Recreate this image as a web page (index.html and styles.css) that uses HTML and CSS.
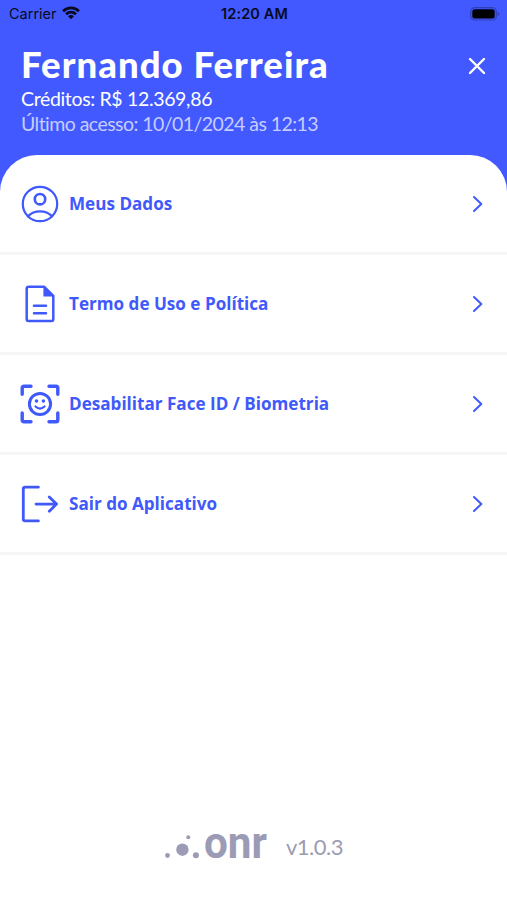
FILE: index.html
```html
<!DOCTYPE html>
<html lang="pt-BR">
<head>
<meta charset="utf-8">
<meta name="viewport" content="width=device-width, initial-scale=1">
<title>Menu</title>
<link rel="stylesheet" href="styles.css">
</head>
<body>
<div class="screen">
  <div class="status">
    <div class="carrier"><span>Carrier</span>
      <svg width="18" height="14" viewBox="0 0 20 15" fill="none" stroke="#080b20" stroke-width="3"><path d="M1.2 5.5a12.5 12.5 0 0 1 17.6 0M4.5 8.8a7.8 7.8 0 0 1 11 0"/><path d="M6.7 11.1a4.6 4.6 0 0 1 6.6 0L10 14.4Z" fill="#080b20" stroke="none"/></svg>
    </div>
    <div class="clock">12:20 AM</div>
    <div class="battery">
      <svg width="30" height="14" viewBox="0 0 30 14"><rect x=".7" y=".7" width="25.6" height="12.3" rx="4" fill="none" stroke="#2f3fb5" stroke-width="1.2"/><rect x="2.3" y="2.3" width="22.4" height="9.1" rx="2.5" fill="#000"/><path d="M27.6 5v4q1.7-.6 1.7-2t-1.7-2Z" fill="#2f3fb5"/></svg>
    </div>
  </div>
  <header class="header">
    <div class="title-row">
      <h1 class="name">Fernando Ferreira</h1>
      <svg class="close" width="18" height="18" viewBox="0 0 18 18" fill="none" stroke="#fff" stroke-width="2.4" stroke-linecap="round"><path d="m2 2 14 14M16 2 2 16"/></svg>
    </div>
    <p class="credits">Créditos: R$ 12.369,86</p>
    <p class="access">Último acesso: 10/01/2024 às 12:13</p>
  </header>
  <main class="sheet">
    <nav>
      <a class="item">
        <svg class="icon" viewBox="0 0 40 40"><circle cx="20" cy="20" r="17.2" stroke-width="2.2"/><circle cx="20" cy="15.2" r="5.2" stroke-width="2.6"/><path d="M8 32.2q4.8-4.8 12-4.8t12 4.8" stroke-width="2.4"/></svg>
        <span class="label">Meus Dados</span>
        <svg class="chevron" viewBox="0 0 12 18"><path d="m2 2 7.3 7L2 16"/></svg>
      </a>
      <a class="item">
        <svg class="icon" viewBox="0 0 40 40"><path d="M8.7 2.7H24L33.3 12v23.2q0 1.7-1.7 1.7H8.4q-1.7 0-1.7-1.7V4.7q0-2 2-2Z" stroke-width="2.5"/><path d="M24 2.7V12h9.3Z" fill="#4059fa" stroke-width="1.2"/><path d="M14 21.8h12M14 29.3h12" stroke-width="2.5"/></svg>
        <span class="label">Termo de Uso e Política</span>
        <svg class="chevron" viewBox="0 0 12 18"><path d="m2 2 7.3 7L2 16"/></svg>
      </a>
      <a class="item">
        <svg class="icon" viewBox="0 0 40 40"><path d="M2.2 10.2V4q0-1.8 1.8-1.8h7M29 2.2h7q1.8 0 1.8 1.8v6.2M37.8 29v7q0 1.8-1.8 1.8h-7M11 37.8H4Q2.2 37.8 2.2 36v-7" stroke-width="3.4"/><circle cx="20" cy="20" r="10.6" stroke-width="3"/><circle cx="16.5" cy="17" r="1.8" fill="#4059fa" stroke="none"/><circle cx="23.4" cy="17" r="1.8" fill="#4059fa" stroke="none"/><path d="M15.5 22.5q4.5 4.2 9 0" stroke-width="2.2"/></svg>
        <span class="label">Desabilitar Face ID / Biometria</span>
        <svg class="chevron" viewBox="0 0 12 18"><path d="m2 2 7.3 7L2 16"/></svg>
      </a>
      <a class="item">
        <svg class="icon" viewBox="0 0 40 40"><path d="M18.4 3.2H5.1Q3.3 3.2 3.3 5v30q0 1.9 1.8 1.9h13.3" stroke-width="2.8"/><path d="M16 20.1h20.5M29.3 12.9l7.2 7.2-7.2 7.2" stroke-width="2.8"/></svg>
        <span class="label">Sair do Aplicativo</span>
        <svg class="chevron" viewBox="0 0 12 18"><path d="m2 2 7.3 7L2 16"/></svg>
      </a>
    </nav>
    <footer class="footer">
      <svg width="108" height="56" viewBox="0 -16 108 56" fill="#9c9bb5"><circle cx="3.5" cy="27.5" r="2.4"/><circle cx="18.4" cy="21.7" r="6.2"/><circle cx="24.3" cy="9.2" r="2"/><circle cx="31.9" cy="27.2" r="3"/><text class="brand" x="40" y="29.5" textLength="63" lengthAdjust="spacingAndGlyphs">onr</text></svg>
      <span class="version">v1.0.3</span>
    </footer>
  </main>
</div>
</body>
</html>
```
FILE: styles.css
```css
* { box-sizing: border-box; }
body { margin: 0; background: #4259ff; }
h1, p { margin: 0; font-weight: 400; }
svg { display: block; flex: none; }
.screen {
  width: 507px;
  height: 900px;
  overflow: hidden;
  display: flex;
  flex-direction: column;
  background: #4259ff;
  font-family: Lato, sans-serif;
  font-variant-ligatures: none;
}
.status {
  height: 28px;
  padding: 0 7px 0 9px;
  display: grid;
  grid-template-columns: 1fr auto 1fr;
  align-items: center;
  font: 500 14.5px/28px Inter, sans-serif;
  color: #080b20;
}
.carrier { display: flex; align-items: center; gap: 5px; font-weight: 400; }
.carrier svg { margin-top: -3px; }
.clock { font-weight: 600; letter-spacing: .1px; }
.battery { justify-self: end; margin-top: -1px; }
.header { height: 126.5px; padding: 15px 21px 0 21px; color: #fff; white-space: nowrap; }
.title-row { height: 44px; display: flex; justify-content: space-between; align-items: center; }
.name { margin-top: -2px; font-size: 36.5px; line-height: 43px; font-weight: 900; letter-spacing: 1.05px; }
.close { margin-top: 1px; }
.credits { font-size: 19.5px; line-height: 24px; letter-spacing: -.34px; }
.access { font-size: 19.5px; line-height: 25px; letter-spacing: -.55px; color: #c6cdff; }
.sheet {
  flex: 1;
  display: flex;
  flex-direction: column;
  background: #fff;
  border-radius: 37px 37px 0 0;
}
.item {
  height: 100.1px;
  padding: 1px 23px 0 20px;
  display: flex;
  align-items: center;
  border-bottom: 3px solid #f6f6f7;
}
.icon { width: 40px; height: 40px; fill: none; stroke: #4059fa; stroke-linecap: round; stroke-linejoin: round; }
.label { margin-left: 9px; font: 700 17.1px/24px "Open Sans", sans-serif; color: #4059fa; white-space: nowrap; }
.chevron { width: 12px; height: 18px; margin-left: auto; fill: none; stroke: #4059fa; stroke-width: 2; stroke-linecap: round; stroke-linejoin: round; }
.footer { margin-top: auto; height: 88px; padding-left: 164px; display: flex; align-items: flex-start; }
.brand { font: 700 44px Roboto, sans-serif; }
.version { margin: 16px 0 0 14px; font-size: 22px; line-height: 38px; letter-spacing: -.5px; color: #9c9bb0; }
```
